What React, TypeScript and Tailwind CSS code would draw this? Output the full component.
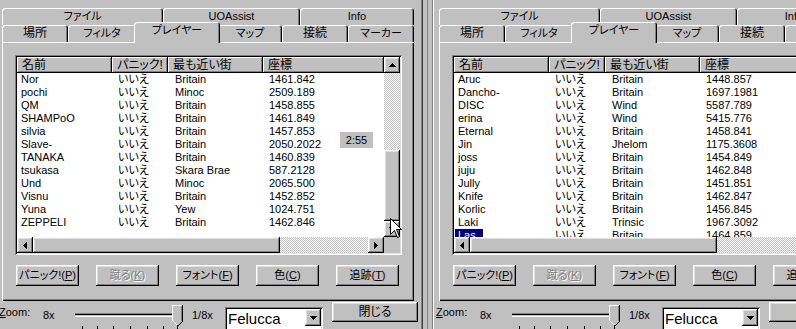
import React from "react";

const RAISED =
  "shadow-[inset_-1px_-1px_#000000,inset_1px_1px_#ffffff,inset_-2px_-2px_#808080,inset_2px_2px_#dfdfdf]";
const SUNKEN =
  "shadow-[inset_1px_1px_#808080,inset_-1px_-1px_#ffffff,inset_2px_2px_#000000,inset_-2px_-2px_#dfdfdf]";
const HEAD = "shadow-[inset_-1px_-1px_#000000,inset_1px_1px_#ffffff,inset_-2px_-2px_#808080]";
const TAB = "shadow-[inset_1px_1px_#ffffff,inset_-1px_0_#000000,inset_-2px_0_#808080]";
const CHECK =
  "bg-[image:repeating-conic-gradient(#c0c0c0_0_25%,#ffffff_0_50%)] bg-[length:2px_2px]";
const PALT = "[font-feature-settings:'palt']";

type Dir = "up" | "down" | "left" | "right";

function Tri({ dir }: { dir: Dir }) {
  const d = {
    up: "M3 0h1v1h-1z M2 1h3v1h-3z M1 2h5v1h-5z M0 3h7v1h-7z",
    down: "M0 0h7v1h-7z M1 1h5v1h-5z M2 2h3v1h-3z M3 3h1v1h-1z",
    left: "M3 0h1v7h-1z M2 1h1v5h-1z M1 2h1v3h-1z M0 3h1v1h-1z",
    right: "M0 0h1v7h-1z M1 1h1v5h-1z M2 2h1v3h-1z M3 3h1v1h-1z",
  }[dir];
  const h = dir === "up" || dir === "down";
  return (
    <svg
      width={h ? 7 : 4}
      height={h ? 4 : 7}
      viewBox={h ? "0 0 7 4" : "0 0 4 7"}
      shapeRendering="crispEdges"
    >
      <path d={d} fill="#000" />
    </svg>
  );
}

function ScrollBtn({ dir }: { dir: Dir }) {
  return (
    <div
      className={
        "w-[16px] h-[16px] shrink-0 bg-[#c0c0c0] flex items-center justify-center " + RAISED
      }
    >
      <Tri dir={dir} />
    </div>
  );
}

type Row = { n: string; c: string; p: string };

const leftRows: Row[] = [
  { n: "Nor", c: "Britain", p: "1461.842" },
  { n: "pochi", c: "Minoc", p: "2509.189" },
  { n: "QM", c: "Britain", p: "1458.855" },
  { n: "SHAMPoO", c: "Britain", p: "1461.849" },
  { n: "silvia", c: "Britain", p: "1457.853" },
  { n: "Slave-", c: "Britain", p: "2050.2022" },
  { n: "TANAKA", c: "Britain", p: "1460.839" },
  { n: "tsukasa", c: "Skara Brae", p: "587.2128" },
  { n: "Und", c: "Minoc", p: "2065.500" },
  { n: "Visnu", c: "Britain", p: "1452.852" },
  { n: "Yuna", c: "Yew", p: "1024.751" },
  { n: "ZEPPELI", c: "Britain", p: "1462.846" },
];

const rightRows: Row[] = [
  { n: "Aruc", c: "Britain", p: "1448.857" },
  { n: "Dancho-", c: "Britain", p: "1697.1981" },
  { n: "DISC", c: "Wind", p: "5587.789" },
  { n: "erina", c: "Wind", p: "5415.776" },
  { n: "Eternal", c: "Britain", p: "1458.841" },
  { n: "Jin", c: "Jhelom", p: "1175.3608" },
  { n: "joss", c: "Britain", p: "1454.849" },
  { n: "juju", c: "Britain", p: "1462.848" },
  { n: "Jully", c: "Britain", p: "1451.851" },
  { n: "Knife", c: "Britain", p: "1462.847" },
  { n: "Korlic", c: "Britain", p: "1456.845" },
  { n: "Laki", c: "Trinsic", p: "1967.3092" },
  { n: "Las", c: "Britain", p: "1464.859" },
];

function Tabs() {
  const tab = "h-[17px] flex items-center justify-center rounded-t-[3px] text-[11px] " + TAB;
  return (
    <div className="pt-[8px] pl-[3px]">
      <div className="flex h-[17px] w-[412px]">
        <div className={tab + " w-[161px]"}>ファイル</div>
        <div className={tab + " w-[137px]"}>UOAssist</div>
        <div className={tab + " w-[114px]"}>Info</div>
      </div>
      <div className="flex h-[17px] w-[412px] items-start">
        <div className={tab + " w-[66px] pb-[1px] text-[12px]"}>場所</div>
        <div className={tab + " w-[68px] pb-[1px]"}>フィルタ</div>
        <div
          className={
            "relative z-10 -mx-[2px] -mt-[3px] w-[86px] h-[21px] bg-[#c0c0c0] flex items-center justify-center rounded-t-[3px] pb-[4px] text-[11px] " +
            TAB
          }
        >
          プレイヤー
        </div>
        <div className={tab + " w-[64px] pb-[1px]"}>マップ</div>
        <div className={tab + " w-[66px] pb-[1px] text-[12px]"}>接続</div>
        <div className={tab + " w-[66px] pb-[1px]"}>マーカー</div>
      </div>
    </div>
  );
}

function ListView({ rows, selectLast }: { rows: Row[]; selectLast?: boolean }) {
  const hc = "h-[16px] flex items-center pl-[5px] text-[12px] bg-[#c0c0c0] " + HEAD;
  return (
    <div className={"relative w-[387px] h-[200px] p-[2px] bg-white " + SUNKEN}>
      <div className="flex flex-col w-[383px] h-[196px] bg-white">
        <div className="flex h-[180px]">
          <div className="w-[367px] h-[180px] overflow-hidden">
            <div className="flex">
              <div className={hc + " w-[95px]"}>名前</div>
              <div className={hc + " w-[56px] text-[11px]"}>パニック!</div>
              <div className={hc + " w-[95px]"}>最も近い街</div>
              <div className={hc + " w-[121px]"}>座標</div>
            </div>
            {rows.map((r, i) => {
              const sel = selectLast && i === rows.length - 1;
              return (
                <div key={r.n} className="flex h-[13px] leading-[13px] text-[11px] text-black">
                  <div className="w-[95px] pl-[1px]">
                    {sel ? (
                      <span className="inline-block w-[28px] pl-[3px] bg-[#000080] text-white">
                        {r.n}
                      </span>
                    ) : (
                      <span className="pl-[3px]">{r.n}</span>
                    )}
                  </div>
                  <div className="w-[56px] pl-[6px] text-[11px]">いいえ</div>
                  <div className="w-[95px] pl-[7px]">{r.c}</div>
                  <div className="w-[121px] pl-[6px]">{r.p}</div>
                </div>
              );
            })}
          </div>
          <div className="w-[16px] h-[180px] flex flex-col">
            <ScrollBtn dir="up" />
            <div className={"h-[77px] " + CHECK}></div>
            <div className={"h-[71px] bg-[#c0c0c0] " + RAISED}></div>
            <ScrollBtn dir="down" />
          </div>
        </div>
        <div className="flex h-[16px]">
          <ScrollBtn dir="left" />
          <div className={"w-[247px] h-[16px] bg-[#c0c0c0] " + RAISED}></div>
          <div className={"w-[88px] h-[16px] " + CHECK}></div>
          <ScrollBtn dir="right" />
          <div className="w-[16px] h-[16px] bg-[#c0c0c0]"></div>
        </div>
      </div>
    </div>
  );
}

function Btn({ children, disabled }: { children: React.ReactNode; disabled?: boolean }) {
  return (
    <div
      className={
        "w-[63px] h-[21px] bg-[#c0c0c0] flex items-center justify-center text-[11px] " +
        RAISED +
        (disabled ? " text-[#808080] [text-shadow:1px_1px_0_#ffffff]" : " text-black")
      }
    >
      {children}
    </div>
  );
}

function Slider() {
  const ticks = [7, 22, 38, 55, 72, 88, 102];
  return (
    <svg width="117" height="28" viewBox="0 0 117 28" shapeRendering="crispEdges">
      <rect x="0" y="12" width="106" height="1" fill="#808080" />
      <rect x="0" y="13" width="105" height="1" fill="#000000" />
      <rect x="0" y="15" width="106" height="1" fill="#ffffff" />
      {ticks.map((t) => (
        <rect key={t} x={t} y="25" width="1" height="3" fill="#000" />
      ))}
      <g transform="translate(97,4)">
        <polygon points="0,0 10,0 10,15 5,20 0,15" fill="#c0c0c0" />
        <path d="M0 0h10v1h-10z M0 0h1v16h-1z" fill="#ffffff" />
        <path d="M10 0h1v16h-1z" fill="#000000" />
        <path d="M1 16h1v1h-1z M2 17h1v1h-1z M3 18h1v1h-1z M4 19h1v1h-1z" fill="#ffffff" />
        <path d="M10 16h1v1h-1z M9 17h1v1h-1z M8 18h1v1h-1z M7 19h1v1h-1z M5 20h2v1h-2z" fill="#000000" />
        <path d="M9 1h1v15h-1z" fill="#808080" />
      </g>
    </svg>
  );
}

function BottomRow() {
  return (
    <div className="flex h-[28px] items-start text-[11px] text-black">
      <div className="w-[44px] pt-[5px] leading-[13px]">
        <span className="underline">Z</span>oom:
      </div>
      <div className="w-[32px] pt-[8px] leading-[13px]">8x</div>
      <div className="w-[117px] h-[28px]">
        <Slider />
      </div>
      <div className="w-[33px] pt-[8px] leading-[13px]">1/8x</div>
      <div className={"w-[98px] h-[26px] mt-[6px] p-[2px] bg-white flex " + SUNKEN}>
        <div className="flex-1 pl-[1px] text-[15px] leading-[20px]">Felucca</div>
        <div className={"w-[16px] h-[17px] bg-[#c0c0c0] flex items-center justify-center " + RAISED}>
          <Tri dir="down" />
        </div>
      </div>
      <div className="w-[9px]"></div>
      <div
        className={
          "w-[86px] h-[20px] mt-[1px] bg-[#c0c0c0] flex items-center justify-center text-[12px] " +
          RAISED
        }
      >
        閉じる
      </div>
    </div>
  );
}

function Window({ rows, selectLast, extra }: { rows: Row[]; selectLast?: boolean; extra?: React.ReactNode }) {
  return (
    <div className="w-[419px] shrink-0 flex flex-col">
      <Tabs />
      <div
        className={
          "relative ml-[3px] w-[412px] h-[259px] pt-[13px] pl-[13px] shadow-[inset_1px_1px_#ffffff,inset_-1px_-1px_#000000,inset_-2px_-2px_#808080]"
        }
      >
        <div className="relative">
          <ListView rows={rows} selectLast={selectLast} />
          {extra}
        </div>
        <div className="flex gap-[17px] mt-[10px] ml-[1px]">
          <Btn>
            パニック!(<span className="underline">P</span>)
          </Btn>
          <Btn disabled>
            蹴る(<span className="underline">K</span>)
          </Btn>
          <Btn>
            フォント(<span className="underline">F</span>)
          </Btn>
          <Btn>
            色(<span className="underline">C</span>)
          </Btn>
          <Btn>
            追跡(<span className="underline">T</span>)
          </Btn>
        </div>
      </div>
      <BottomRow />
    </div>
  );
}

function Divider() {
  return (
    <div className="w-[18px] shrink-0 h-[329px] flex">
      <div className="w-[3px]"></div>
      <div className="w-[1px] bg-[#808080]"></div>
      <div className="w-[1px] bg-[#404040]"></div>
      <div className="w-[4px]"></div>
      <div className="w-[1px] bg-[#808080]"></div>
      <div className="w-[4px]"></div>
      <div className="w-[1px] bg-[#808080]"></div>
      <div className="w-[1px] bg-[#ffffff]"></div>
      <div className="w-[2px]"></div>
    </div>
  );
}

function Cursor() {
  return (
    <svg width="13" height="21" viewBox="0 0 13 21" className="absolute left-[390px] top-[218px] z-20">
      <path
        d="M0.5 0.5 L0.5 16.5 L4.5 12.5 L7.5 19.5 L9.5 18.5 L6.5 11.5 L11.5 11.5 Z"
        fill="#ffffff"
        stroke="#000000"
        strokeWidth="1"
      />
    </svg>
  );
}

export default function App() {
  return (
    <div
      className={
        "relative w-[796px] h-[329px] overflow-hidden bg-[#c0c0c0] text-black font-['Liberation_Sans','Noto_Sans_CJK_JP',sans-serif] flex " +
        PALT
      }
    >
      <div className="-ml-[1px] flex shrink-0">
        <Window
          rows={leftRows}
          extra={
            <div className="absolute left-[325px] top-[77px] w-[33px] h-[16px] bg-[#c0c0c0] text-[11px] leading-[16px] flex items-center justify-center">
              2:55
            </div>
          }
        />
        <Divider />
        <Window rows={rightRows} selectLast />
      </div>
      <Cursor />
    </div>
  );
}
